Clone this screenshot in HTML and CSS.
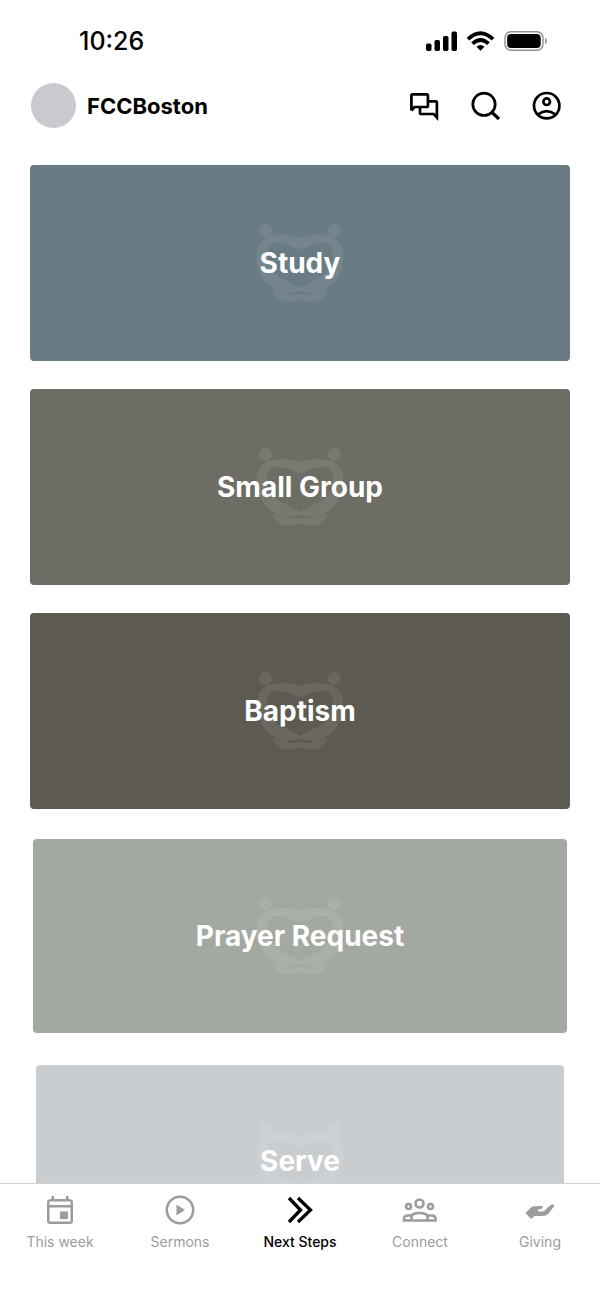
FILE: index.html
```html
<!DOCTYPE html>
<html lang="en">

<head>
    <meta charset="UTF-8">
    <meta name="viewport" content="width=device-width, initial-scale=1.0">
    <title>FCCBoston - Next Steps</title>
    <link rel="stylesheet" href="styles.css">
</head>

<body>
    <!-- Shared heart logo -->
    <svg width="0" height="0" class="sprite" aria-hidden="true">
        <symbol id="heart" viewBox="0 0 88 78">
            <circle cx="9.500" cy="6.500" r="6.500" />
            <circle cx="78" cy="6.500" r="6.500" />
            <path fill-rule="evenodd" d="M16 12C26 10 36 11 44 14C52 11 62 10 72 12C84 15 89 26 87 38C86 53 74 65 60 70L44 67L28 70C14 65 2 53 1 38C-1 26 4 15 16 12ZM44 22C34 14 20 15 14 22C7 32 12 45 23 53C31 58 38 60 44 64C50 60 57 58 65 53C76 45 81 32 74 22C68 15 54 14 44 22Z" />
            <path d="M16 65Q28 73 44 70Q60 73 72 65Q68 75 60 77Q52 78 44 75Q36 78 28 77Q20 75 16 65Z" />
            <path d="M19 17Q34 13 44 22L43 26Q33 19 19 19ZM69 17Q54 13 44 22L45 26Q55 19 69 19Z" />
        </symbol>
    </svg>

    <div class="app">
        <div class="status-bar">
            <span class="time">10:26</span>
            <div class="status-icons">
                <svg width="32" height="20" viewBox="0 0 32 20">
                    <rect x="0" y="12.500" width="5.500" height="7.500" rx="1.700" />
                    <rect x="8.500" y="9" width="5.500" height="11" rx="1.700" />
                    <rect x="17" y="5" width="5.500" height="15" rx="1.700" />
                    <rect x="25.500" y=".5" width="5.500" height="19.500" rx="1.700" />
                </svg>
                <svg width="28" height="20" viewBox="0 0 28 20">
                    <g fill="none" stroke="#000" stroke-width="3.800">
                        <path d="M1 8.200Q13.500-3.700 26 8.200" />
                        <path d="M5.500 12.700Q13.500 5.300 21.500 12.700" />
                    </g>
                    <path d="M9.500 15.800Q13.500 12.200 17.500 15.800L13.500 19.800Z" />
                </svg>
                <svg width="44" height="20" viewBox="0 0 44 20">
                    <rect x="1" y=".7" width="38" height="18.600" rx="6" fill="none" stroke="#8f8f8f" stroke-width="1.400" />
                    <rect x="3.200" y="3" width="33.500" height="14" rx="4" />
                    <path d="M41 7q2 1 2 3t-2 3z" fill="#8f8f8f" />
                </svg>
            </div>
        </div>

        <header class="header">
            <div class="avatar"></div>
            <h1 class="church-name">FCCBoston</h1>
            <div class="actions">
                <button class="icon-button" aria-label="Messages">
                    <svg class="line" viewBox="0 0 32 32">
                        <path d="M2.400 20.500V5.700Q2.400 4.400 3.700 4.400H17.600Q18.900 4.400 18.900 5.700V15.700Q18.900 17 17.600 17H5.500L2.400 20.500M20 11.400H26.600Q27.900 11.400 27.900 12.700V27.500L24.800 24H12.300Q11 24 11 22.700V18" />
                    </svg>
                </button>
                <button class="icon-button" aria-label="Search">
                    <svg class="line" viewBox="0 0 32 32">
                        <circle cx="14" cy="14.300" r="11.200" />
                        <path d="M21.500 22L29 29" stroke-width="3.200" />
                    </svg>
                </button>
                <button class="icon-button" aria-label="Account">
                    <svg class="line" viewBox="0 0 32 32">
                        <circle cx="15.700" cy="15.700" r="12.700" />
                        <circle cx="15.700" cy="11.700" r="3.300" />
                        <path d="M7.200 24.300Q15.700 17.800 24.200 24.300" />
                    </svg>
                </button>
            </div>
        </header>

        <main class="steps">
            <a href="#" class="card study">
                <svg class="logo"><use href="#heart" /></svg>
                <span>Study</span>
            </a>
            <a href="#" class="card small-group">
                <svg class="logo"><use href="#heart" /></svg>
                <span>Small Group</span>
            </a>
            <a href="#" class="card baptism">
                <svg class="logo"><use href="#heart" /></svg>
                <span>Baptism</span>
            </a>
            <a href="#" class="card prayer">
                <svg class="logo"><use href="#heart" /></svg>
                <span>Prayer Request</span>
            </a>
            <a href="#" class="card serve">
                <svg class="logo"><use href="#heart" /></svg>
                <span>Serve</span>
            </a>
        </main>

        <nav class="tabs">
            <a href="#" class="tab">
                <svg viewBox="0 0 36 32">
                    <path fill-rule="evenodd" d="M9.500 2H12v3h12V2h2.500v3q4.500 0 4.500 3v19q0 3-3 3H8q-3 0-3-3V8q0-3 4.500-3zM7.500 7.500v3.500h21V7.500zM7.500 13.500v14h21v-14z" />
                    <rect x="18" y="17.500" width="8" height="7.500" />
                </svg>
                <span>This week</span>
            </a>
            <a href="#" class="tab">
                <svg viewBox="0 0 36 32">
                    <circle cx="18" cy="16" r="13.200" fill="none" stroke="currentColor" stroke-width="2.600" />
                    <path d="M14.500 10.500L23 16l-8.500 5.500z" />
                </svg>
                <span>Sermons</span>
            </a>
            <a href="#" class="tab active" aria-current="page">
                <svg viewBox="0 0 36 32">
                    <path d="M7 4L18.500 16 7 28M16 4L28.500 16 16 28" fill="none" stroke="currentColor" stroke-width="3.300" />
                </svg>
                <span>Next Steps</span>
            </a>
            <a href="#" class="tab">
                <svg viewBox="0 0 36 32">
                    <g fill="none" stroke="currentColor" stroke-width="2.600">
                        <circle cx="17.500" cy="9.500" r="4" />
                        <circle cx="6.500" cy="12.500" r="2.500" />
                        <circle cx="28.500" cy="12.500" r="2.500" />
                        <path d="M9.500 26.500V23q0-4 8-4t8 4v3.500M10 21.500H6q-4 0-4 3v2h31.500v-2q0-3-4-3h-4.500" />
                    </g>
                </svg>
                <span>Connect</span>
            </a>
            <a href="#" class="tab">
                <svg viewBox="0 0 36 32">
                    <path d="M3.500 19L9.500 13Q11 11.800 20 12Q21.500 12.200 20.500 14Q19 15.500 16 15.500V17Q22 19 24.500 14.500L29.500 10.500Q33 10 32 12.500L26 20Q24 22 20 22H12.500L9 25Z" />
                </svg>
                <span>Giving</span>
            </a>
        </nav>
    </div>
</body>

</html>
```
FILE: styles.css
```css
* {
    box-sizing: border-box;
}

body {
    margin: 0;
    background-color: #fff;
    color: #000;
    font-family: Inter, 'Liberation Sans', sans-serif;
}

a {
    color: inherit;
    text-decoration: none;
}

.sprite {
    position: absolute;
}

.app {
    display: flex;
    flex-direction: column;
    height: 100vh;
}

.status-bar {
    display: flex;
    justify-content: space-between;
    align-items: center;
    padding: 26px 52px 0 79px;
}

.time {
    font-size: 25px;
    line-height: 30px;
    font-weight: 500;
}

.status-icons {
    display: flex;
    gap: 9px;
}

.header {
    display: flex;
    align-items: center;
    padding: 27px 37px 37px 31px;
}

.avatar {
    width: 45px;
    height: 45px;
    border-radius: 50%;
    background-color: #c8cacf;
}

.church-name {
    margin: 0 0 0 11px;
    font-size: 22px;
    line-height: 28px;
    font-weight: 700;
}

.actions {
    display: flex;
    gap: 29px;
    margin-left: auto;
}

.icon-button {
    width: 32px;
    height: 32px;
    padding: 0;
    border: none;
    background: none;
    cursor: pointer;
}

.icon-button svg {
    display: block;
    width: 32px;
    height: 32px;
}

.line {
    fill: none;
    stroke: #000;
    stroke-width: 2.7;
}

.steps {
    flex: 1;
    min-height: 0;
    display: flex;
    flex-direction: column;
    gap: 28px;
    padding: 0 30px;
    overflow: hidden;
}

.card {
    flex: none;
    display: grid;
    place-items: center;
    height: 196px;
    border-radius: 4px;
    color: #fff;
    font-size: 28px;
    line-height: 36px;
    font-weight: 700;
}

.card > * {
    grid-area: 1 / 1;
}

.logo {
    width: 88px;
    height: 78px;
    fill: #fff;
    opacity: 0.08;
}

.study {
    background-color: #697b83;
}

.small-group {
    background-color: #6e6d65;
}

.baptism {
    background-color: #5d5a52;
}

/* Cards shrink slightly towards the bottom of the list */
.prayer {
    height: 194px;
    margin: 2px 3px 0;
    background-color: #a3a8a1;
}

.serve {
    height: 192px;
    margin: 4px 6px 0;
    background-color: #cacdd0;
}

.tabs {
    display: grid;
    grid-template-columns: repeat(5, 1fr);
    height: 117px;
    padding-top: 10px;
    border-top: 1px solid #d2d2d2;
}

.tab {
    display: flex;
    flex-direction: column;
    align-items: center;
    gap: 6px;
    color: #9c9c9c;
    font-size: 14px;
    line-height: 20px;
}

.tab svg {
    width: 36px;
    height: 32px;
    fill: currentColor;
}

.tab.active {
    color: #000;
    font-weight: 500;
}
```
